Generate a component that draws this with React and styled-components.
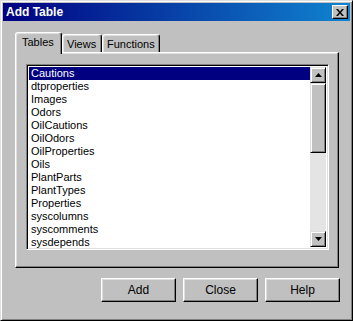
import styled, { createGlobalStyle } from "styled-components"

const Global = createGlobalStyle`
body {
  margin: 0;
  background: #c0c0c0;
  font-family: "Liberation Sans", Arial, sans-serif;
  font-size: 11px;
}
`

const Window = styled.div`
width: 353px;
height: 321px;
box-sizing: border-box;
background: #c0c0c0;
border: 1px solid;
border-color: #dfdfdf #000 #000 #dfdfdf;
box-shadow: inset 1px 1px #fff, inset -1px -1px #808080;
padding: 2px;
display: flex;
flex-direction: column;
`

const TitleBar = styled.div`
height: 18px;
display: flex;
align-items: center;
justify-content: space-between;
padding: 0 2px 0 3px;
background: linear-gradient(to right, #000080, #1084d0);
color: #fff;
font-weight: bold;
font-size: 12px;
`

const CloseBtn = styled.div`
width: 16px;
height: 14px;
box-sizing: border-box;
background: #c0c0c0;
border: 1px solid;
border-color: #fff #000 #000 #fff;
box-shadow: inset -1px -1px #808080;
display: flex;
align-items: center;
justify-content: center;
`

const Body = styled.div`
flex: 1;
display: flex;
flex-direction: column;
padding: 11px 10px 0 12px;
`

const TabStrip = styled.div`
display: flex;
align-items: flex-end;
height: 20px;
`

const Tab = styled.div`
position: relative;
z-index: ${p => (p.$active ? 2 : 0)};
width: ${p => p.$w}px;
height: ${p => (p.$active ? 22 : 18)}px;
margin-bottom: ${p => (p.$active ? -2 : 0)}px;
box-sizing: border-box;
background: #c0c0c0;
border-top: 1px solid #fff;
border-left: 1px solid #fff;
border-right: 1px solid #000;
border-radius: 3px 3px 0 0;
box-shadow: inset -1px 0 #808080, inset 1px 1px #dfdfdf;
padding: ${p => (p.$active ? "3px 0 0 6px" : "3px 0 0 4px")};
color: #000;
`

const Panel = styled.div`
width: 324px;
height: 216px;
box-sizing: border-box;
border: 1px solid;
border-color: #fff #000 #000 #fff;
box-shadow: inset -1px -1px #808080, inset 1px 1px #dfdfdf;
padding: 11px 0 0 10px;
`

const ListBox = styled.div`
width: 303px;
height: 186px;
box-sizing: border-box;
background: #fff;
border: 1px solid;
border-color: #808080 #fff #fff #808080;
box-shadow: inset 1px 1px #000, inset -1px -1px #dfdfdf;
padding: 2px 2px 2px 2px;
display: flex;
`

const Items = styled.div`
flex: 1;
display: flex;
flex-direction: column;
`

const Row = styled.div`
height: 13px;
line-height: 13px;
padding-left: 2px;
color: ${p => (p.$selected ? "#fff" : "#000")};
background: ${p => (p.$selected ? "#000080" : "transparent")};
white-space: nowrap;
`

const ScrollBar = styled.div`
width: 16px;
display: flex;
flex-direction: column;
background: #e4e4e4;
`

const ScrollBtn = styled.div`
width: 16px;
height: 16px;
box-sizing: border-box;
background: #c0c0c0;
border: 1px solid;
border-color: #dfdfdf #000 #000 #dfdfdf;
box-shadow: inset 1px 1px #fff, inset -1px -1px #808080;
display: flex;
align-items: center;
justify-content: center;
`

const Thumb = styled(ScrollBtn)`
height: 70px;
`

const Track = styled.div`
flex: 1;
`

const ButtonRow = styled.div`
display: flex;
justify-content: flex-end;
gap: 7px;
margin-top: 10px;
`

const Button = styled.div`
width: 75px;
height: 24px;
box-sizing: border-box;
background: #c0c0c0;
border: 1px solid;
border-color: #fff #000 #000 #fff;
box-shadow: inset -1px -1px #808080, inset 1px 1px #dfdfdf;
display: flex;
align-items: center;
justify-content: center;
color: #000;
font-size: 12px;
`

const tables = [
  "Cautions", "dtproperties", "Images", "Odors", "OilCautions", "OilOdors",
  "OilProperties", "Oils", "PlantParts", "PlantTypes", "Properties",
  "syscolumns", "syscomments", "sysdepends",
]

function Arrow({ down }) {
  return (
    <svg width="7" height="4" viewBox="0 0 7 4">
      <path d={down ? "M0 0h7L3.5 4z" : "M3.5 0L7 4H0z"} fill="#000" />
    </svg>
  )
}

export default function App() {
  return (
    <>
      <Global />
      <Window>
        <TitleBar>
          <span>Add Table</span>
          <CloseBtn>
            <svg width="8" height="7" viewBox="0 0 8 7">
              <path d="M0 0h2l2 2.5L6 0h2L5 3.5 8 7H6L4 4.5 2 7H0l3-3.5z" fill="#000" />
            </svg>
          </CloseBtn>
        </TitleBar>
        <Body>
          <TabStrip>
            <Tab $active $w={47}>Tables</Tab>
            <Tab $w={40}>Views</Tab>
            <Tab $w={58}>Functions</Tab>
          </TabStrip>
          <Panel>
            <ListBox>
              <Items>
                {tables.map((t, i) => (
                  <Row key={t} $selected={i === 0}>{t}</Row>
                ))}
              </Items>
              <ScrollBar>
                <ScrollBtn><Arrow /></ScrollBtn>
                <Thumb />
                <Track />
                <ScrollBtn><Arrow down /></ScrollBtn>
              </ScrollBar>
            </ListBox>
          </Panel>
          <ButtonRow>
            <Button>Add</Button>
            <Button>Close</Button>
            <Button>Help</Button>
          </ButtonRow>
        </Body>
      </Window>
    </>
  )
}
